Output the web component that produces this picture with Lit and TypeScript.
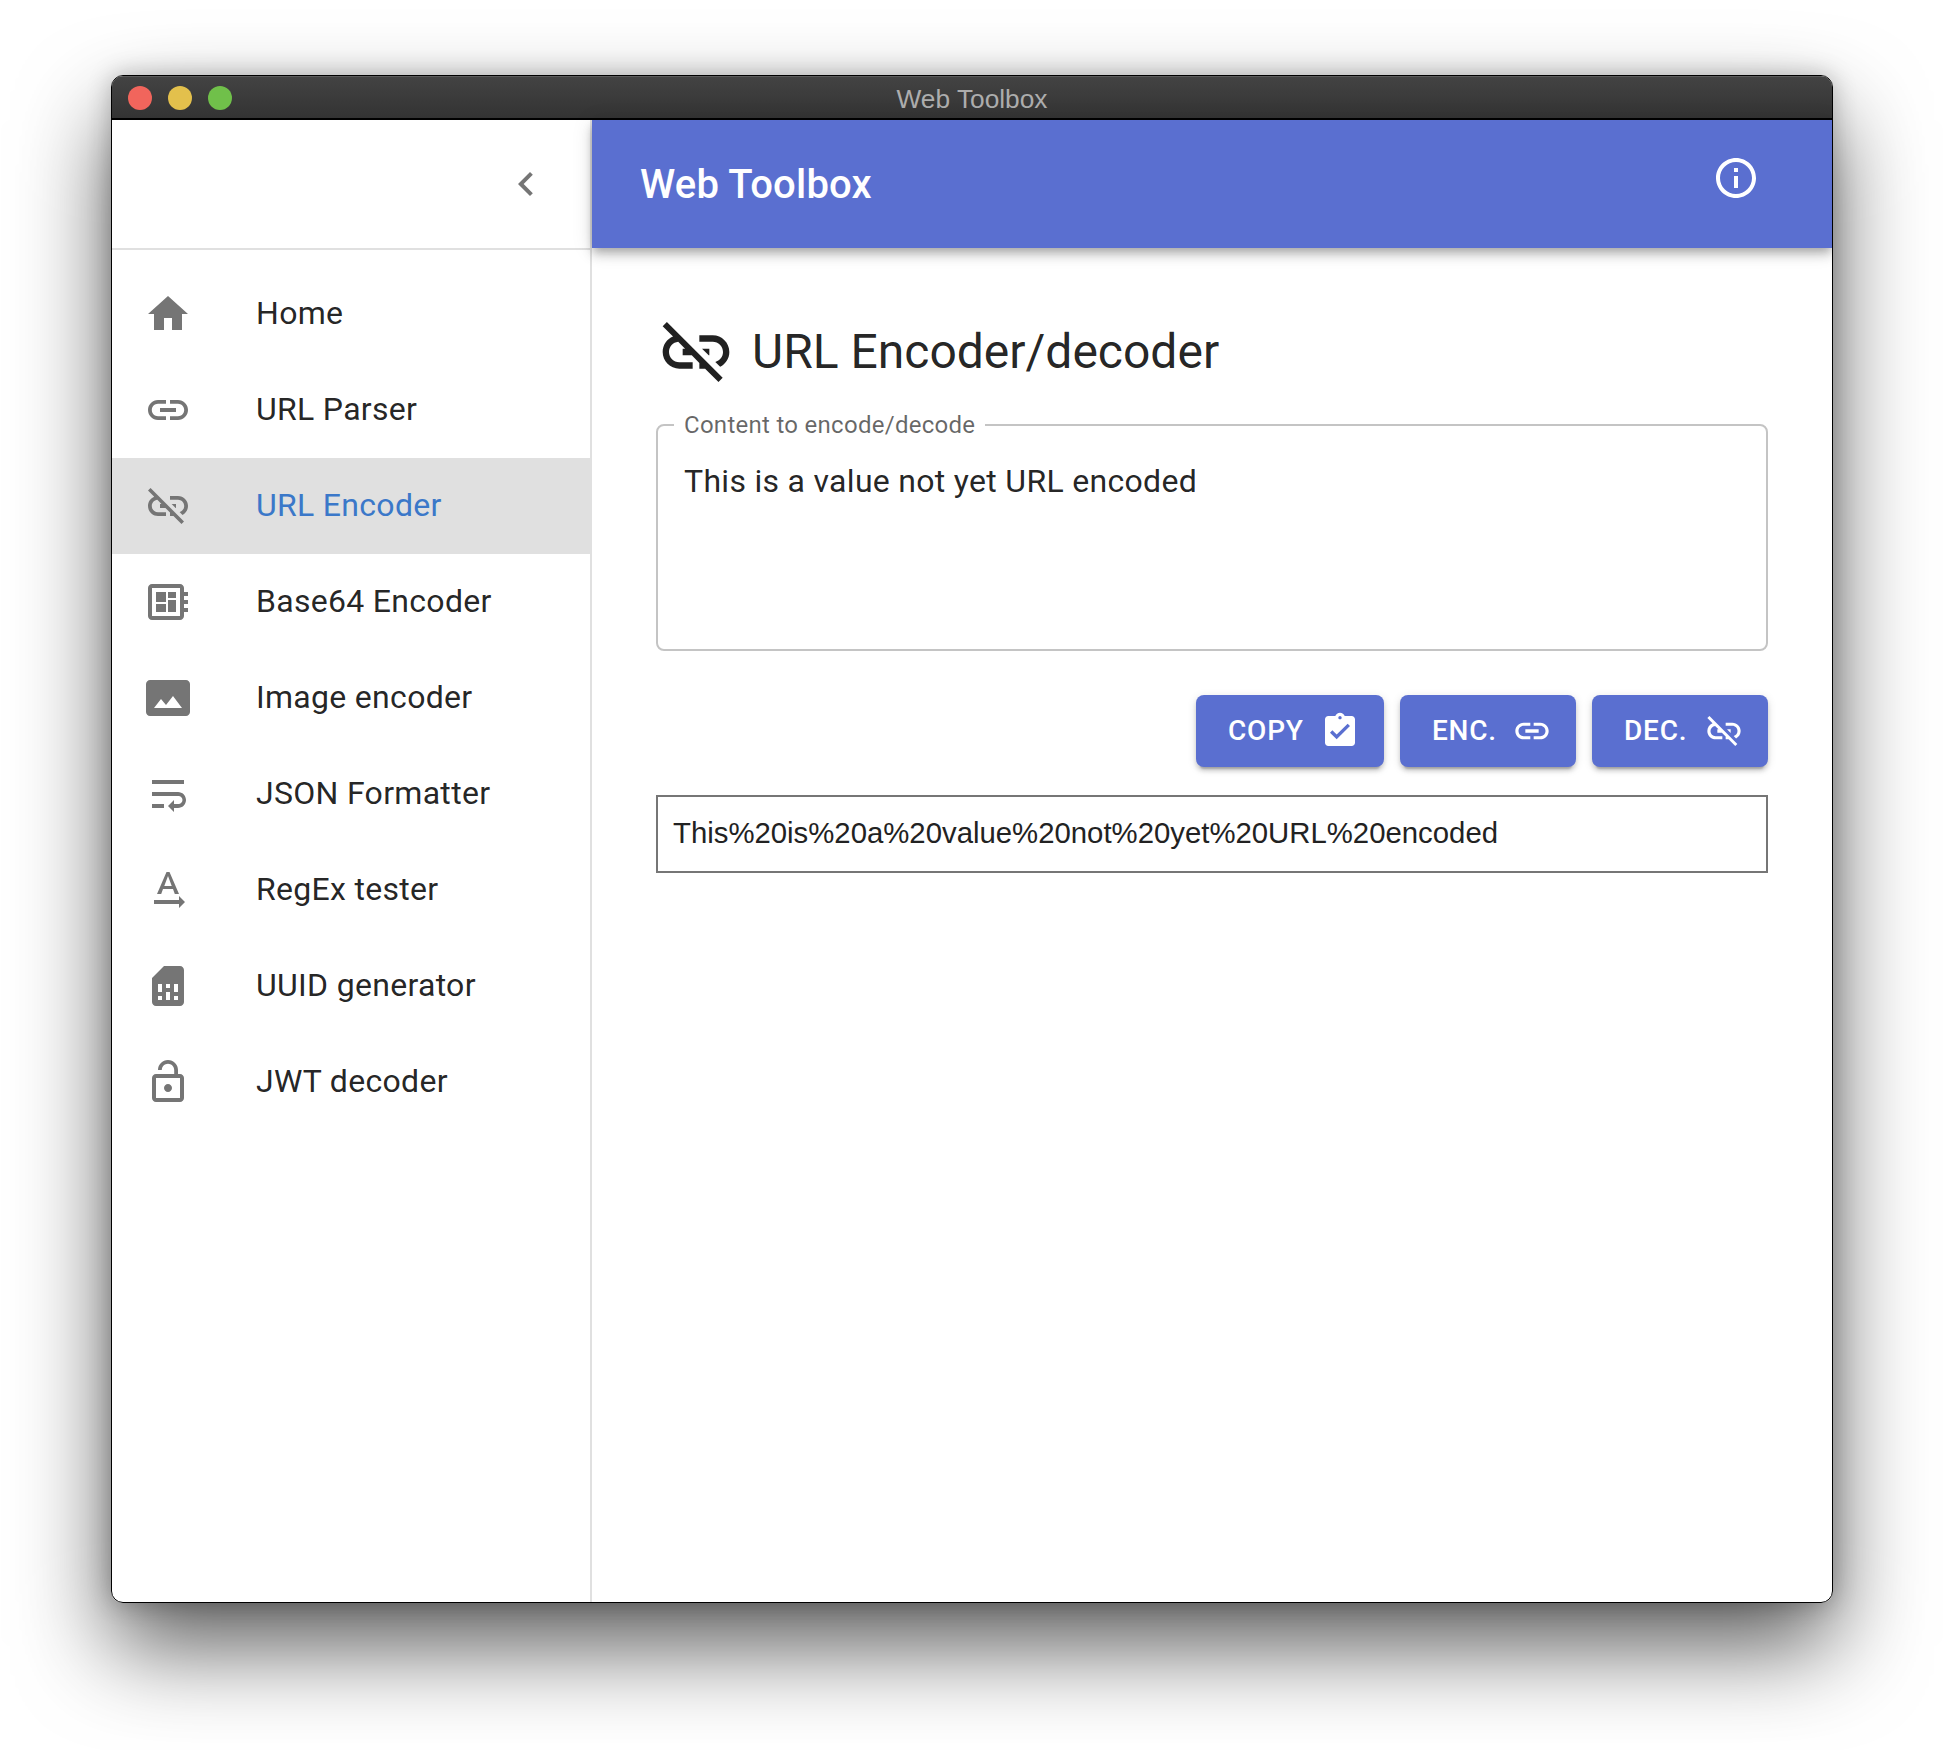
import { LitElement, html, css, svg } from "lit";
import { customElement } from "lit/decorators.js";

const ICONS: Record<string, string> = {
  home: "M10 20v-6h4v6h5v-8h3L12 3 2 12h3v8z",
  link: "M3.9 12c0-1.71 1.39-3.1 3.1-3.1h4V7H7c-2.76 0-5 2.24-5 5s2.24 5 5 5h4v-1.9H7c-1.71 0-3.1-1.39-3.1-3.1zM8 13h8v-2H8v2zm9-6h-4v1.9h4c1.71 0 3.1 1.39 3.1 3.1s-1.39 3.1-3.1 3.1h-4V17h4c2.76 0 5-2.24 5-5s-2.24-5-5-5z",
  linkOff: "M17 7h-4v1.9h4c1.71 0 3.1 1.39 3.1 3.1 0 1.43-.98 2.63-2.31 2.98l1.46 1.46C20.88 15.61 22 13.95 22 12c0-2.76-2.24-5-5-5zm-1 4h-2.19l2 2H16zM2 4.27l3.11 3.11C3.29 8.12 2 9.91 2 12c0 2.76 2.24 5 5 5h4v-1.9H7c-1.71 0-3.1-1.39-3.1-3.1 0-1.59 1.21-2.9 2.76-3.07L8.73 11H8v2h2.73L13 15.27V17h1.73l4.01 4L20 19.74 3.27 3 2 4.27z",
  board: "M22 9V7h-2V5c0-1.1-.9-2-2-2H4c-1.1 0-2 .9-2 2v14c0 1.1.9 2 2 2h14c1.1 0 2-.9 2-2v-2h2v-2h-2v-2h2v-2h-2V9h2zm-4 10H4V5h14v14zM6 13h5v4H6zm6-6h4v3h-4zM6 7h5v5H6zm6 4h4v6h-4z",
  image: "M21 3H3C2 3 1 4 1 5v14c0 1.1.9 2 2 2h18c1 0 2-1 2-2V5c0-1-1-2-2-2zM5 17l3.5-4.5 2.5 3.01L14.5 11l4.5 6H5z",
  wrap: "M4 19h6v-2H4v2zM20 5H4v2h16V5zm-3 6H4v2h13.25c1.1 0 2 .9 2 2s-.9 2-2 2H15v-2l-3 3 3 3v-2h2c2.21 0 4-1.79 4-4s-1.79-4-4-4z",
  textDir: "M12.75 3h-1.5L6.5 14h2.1l.9-2.5h5l.9 2.5h2.1L12.75 3zm-2.62 7L12 4.98 13.87 10h-3.74zm10.37 8l-3-3v2H5v2h12.5v2l3-3z",
  sim: "M19.99 4c0-1.1-.89-2-1.99-2h-8L4 8v12c0 1.1.9 2 2 2h12.01c1.1 0 1.99-.9 1.99-2l-.01-16zM9 19H7v-2h2v2zm8 0h-2v-2h2v2zm-8-4H7v-4h2v4zm4 4h-2v-4h2v4zm0-6h-2v-2h2v2zm4 2h-2v-4h2v4z",
  lockOpen: "M12 17c1.1 0 2-.9 2-2s-.9-2-2-2-2 .9-2 2 .9 2 2 2zm6-9h-1V6c0-2.76-2.24-5-5-5S7 3.24 7 6h1.9c0-1.71 1.39-3.1 3.1-3.1 1.71 0 3.1 1.39 3.1 3.1v2H6c-1.1 0-2 .9-2 2v10c0 1.1.9 2 2 2h12c1.1 0 2-.9 2-2V10c0-1.1-.9-2-2-2zm0 12H6V10h12v10z",
  info: "M11 7h2v2h-2zm0 4h2v6h-2zm1-9C6.48 2 2 6.48 2 12s4.48 10 10 10 10-4.48 10-10S17.52 2 12 2zm0 18c-4.41 0-8-3.59-8-8s3.59-8 8-8 8 3.59 8 8-3.59 8-8 8z",
  chevronLeft: "M15.41 7.41L14 6l-6 6 6 6 1.41-1.41L10.83 12z",
  clipboard: "M19 3h-4.18C14.4 1.84 13.3 1 12 1c-1.3 0-2.4.84-2.82 2H5c-1.1 0-2 .9-2 2v14c0 1.1.9 2 2 2h14c1.1 0 2-.9 2-2V5c0-1.1-.9-2-2-2zm-7 0c.55 0 1 .45 1 1s-.45 1-1 1-1-.45-1-1 .45-1 1-1zm-2 14l-4-4 1.41-1.41L10 14.17l6.59-6.59L18 9l-8 8z",
};

const NAV = [
  { icon: "home", label: "Home" },
  { icon: "link", label: "URL Parser" },
  { icon: "linkOff", label: "URL Encoder", active: true },
  { icon: "board", label: "Base64 Encoder" },
  { icon: "image", label: "Image encoder" },
  { icon: "wrap", label: "JSON Formatter" },
  { icon: "textDir", label: "RegEx tester" },
  { icon: "sim", label: "UUID generator" },
  { icon: "lockOpen", label: "JWT decoder" },
];

const icon = (name: string) =>
  html`<svg class="icon" viewBox="0 0 24 24">${svg`<path d=${ICONS[name]}></path>`}</svg>`;

@customElement("app-root")
export class AppRoot extends LitElement {
  static styles = css`
    :host {
      display: block;
      width: 1944px;
      height: 1750px;
      padding: 75px 111px 147px 111px;
      box-sizing: border-box;
      background: #fff;
      font-family: Roboto, sans-serif;
      color: rgba(0, 0, 0, 0.87);
    }

    .shadow {
      height: 100%;
      border-radius: 12px;
      box-shadow: 0 44px 92px rgba(0, 0, 0, 0.64), 0 0 24px rgba(0, 0, 0, 0.24);
    }

    .window {
      height: 100%;
      display: flex;
      flex-direction: column;
      border-radius: 12px;
      overflow: hidden;
      background: #fff;
      border: 1px solid #000;
      box-sizing: border-box;
    }

    .titlebar {
      height: 44px;
      flex: none;
      display: grid;
      grid-template-columns: 1fr auto 1fr;
      align-items: center;
      box-sizing: border-box;
      background: linear-gradient(#434343, #333333);
      border-top: 1px solid #5c5c5c;
      border-bottom: 2px solid #000;
      padding: 0 16px;
    }

    .lights {
      display: flex;
      gap: 16px;
    }

    .light {
      width: 24px;
      height: 24px;
      border-radius: 50%;
    }

    .red { background: #f1655c; }
    .yellow { background: #e3c04c; }
    .green { background: #70c04a; }

    .window-title {
      padding-top: 3px;
      font-family: "Liberation Sans", Arial, sans-serif;
      font-size: 26.3px;
      color: #adadad;
    }

    .body {
      flex: 1;
      display: flex;
      min-height: 0;
    }

    .sidebar {
      width: 480px;
      flex: none;
      box-sizing: border-box;
      border-right: 2px solid #e0e0e0;
    }

    .sidebar-head {
      height: 130px;
      box-sizing: border-box;
      display: flex;
      align-items: center;
      justify-content: flex-end;
      padding: 0 16px 0 0;
      border-bottom: 2px solid #e0e0e0;
    }

    .icon-button {
      width: 96px;
      height: 96px;
      display: flex;
      align-items: center;
      justify-content: center;
    }

    .icon {
      width: 48px;
      height: 48px;
      flex: none;
      fill: currentColor;
      display: block;
    }

    .chevron { color: #757575; }

    .nav {
      padding-top: 16px;
    }

    .nav-item {
      height: 96px;
      display: flex;
      align-items: center;
      padding-left: 32px;
      font-size: 32px;
      letter-spacing: 0.3px;
    }

    .nav-item span {
      padding-bottom: 3px;
    }

    .nav-item .icon {
      color: #757575;
      margin-right: 64px;
    }

    .nav-item.active {
      background: #e0e0e0;
      color: #3b78c9;
    }

    .main {
      flex: 1;
      min-width: 0;
      display: flex;
      flex-direction: column;
    }

    .appbar {
      height: 128px;
      flex: none;
      position: relative;
      z-index: 1;
      display: flex;
      align-items: center;
      justify-content: space-between;
      padding: 0 48px;
      background: #5a6fd0;
      color: #fff;
      box-shadow: 0 4px 8px -2px rgba(0, 0, 0, 0.2), 0 8px 10px 0 rgba(0, 0, 0, 0.14), 0 2px 20px 0 rgba(0, 0, 0, 0.12);
    }

    .appbar h1 {
      margin: 0;
      font-size: 40px;
      font-weight: 500;
      letter-spacing: 0.2px;
    }

    .info {
      margin-bottom: 12px;
    }

    .content {
      flex: 1;
      padding: 64px;
    }

    .heading {
      display: flex;
      align-items: center;
      gap: 16px;
      height: 80px;
    }

    .heading .icon {
      width: 80px;
      height: 80px;
    }

    .heading h2 {
      margin: 0;
      padding-bottom: 2px;
      font-size: 48px;
      font-weight: 400;
    }

    .field {
      margin: 21px 0 0;
      padding: 0 26px;
      height: 238px;
      box-sizing: border-box;
      border: 2px solid #c4c4c4;
      border-radius: 8px;
    }

    .field legend {
      margin-inline-start: -10px;
      padding: 0 10px;
      font-size: 24px;
      line-height: 24px;
      letter-spacing: 0.28px;
      color: rgba(0, 0, 0, 0.6);
    }

    .value {
      padding-top: 21px;
      font-size: 32px;
      line-height: 46px;
      letter-spacing: 0.3px;
    }

    .actions {
      display: flex;
      justify-content: flex-end;
      gap: 16px;
      margin-top: 44px;
    }

    .btn {
      width: 176px;
      height: 72px;
      box-sizing: border-box;
      display: flex;
      align-items: center;
      justify-content: space-between;
      padding: 0 24px 2px 32px;
      border-radius: 8px;
      background: #5a6fd0;
      color: #fff;
      font-size: 28px;
      font-weight: 500;
      letter-spacing: 0.8px;
      box-shadow: 0 6px 2px -4px rgba(0, 0, 0, 0.2), 0 4px 4px 0 rgba(0, 0, 0, 0.14), 0 2px 10px 0 rgba(0, 0, 0, 0.12);
    }

    .btn.wide {
      width: 188px;
    }

    .btn .icon {
      width: 40px;
      height: 40px;
      margin-bottom: -2px;
    }

    .output {
      margin-top: 28px;
      height: 78px;
      box-sizing: border-box;
      display: flex;
      align-items: center;
      padding: 0 15px 2px;
      border: 2px solid #767676;
      font-family: "Liberation Sans", Arial, sans-serif;
      font-size: 29.33px;
      color: #222;
    }
  `;

  render() {
    return html`
      <div class="shadow">
        <div class="window">
          <div class="titlebar">
            <div class="lights">
              <span class="light red"></span>
              <span class="light yellow"></span>
              <span class="light green"></span>
            </div>
            <div class="window-title">Web Toolbox</div>
          </div>
          <div class="body">
            <aside class="sidebar">
              <div class="sidebar-head">
                <div class="icon-button chevron">${icon("chevronLeft")}</div>
              </div>
              <nav class="nav">
                ${NAV.map(
                  (n) => html`<div class="nav-item ${n.active ? "active" : ""}">
                    ${icon(n.icon)}<span>${n.label}</span>
                  </div>`
                )}
              </nav>
            </aside>
            <div class="main">
              <header class="appbar">
                <h1>Web Toolbox</h1>
                <div class="icon-button info">${icon("info")}</div>
              </header>
              <section class="content">
                <div class="heading">
                  ${icon("linkOff")}
                  <h2>URL Encoder/decoder</h2>
                </div>
                <fieldset class="field">
                  <legend>Content to encode/decode</legend>
                  <div class="value">This is a value not yet URL encoded</div>
                </fieldset>
                <div class="actions">
                  <div class="btn wide">COPY ${icon("clipboard")}</div>
                  <div class="btn">ENC. ${icon("link")}</div>
                  <div class="btn">DEC. ${icon("linkOff")}</div>
                </div>
                <div class="output">This%20is%20a%20value%20not%20yet%20URL%20encoded</div>
              </section>
            </div>
          </div>
        </div>
      </div>
    `;
  }
}
